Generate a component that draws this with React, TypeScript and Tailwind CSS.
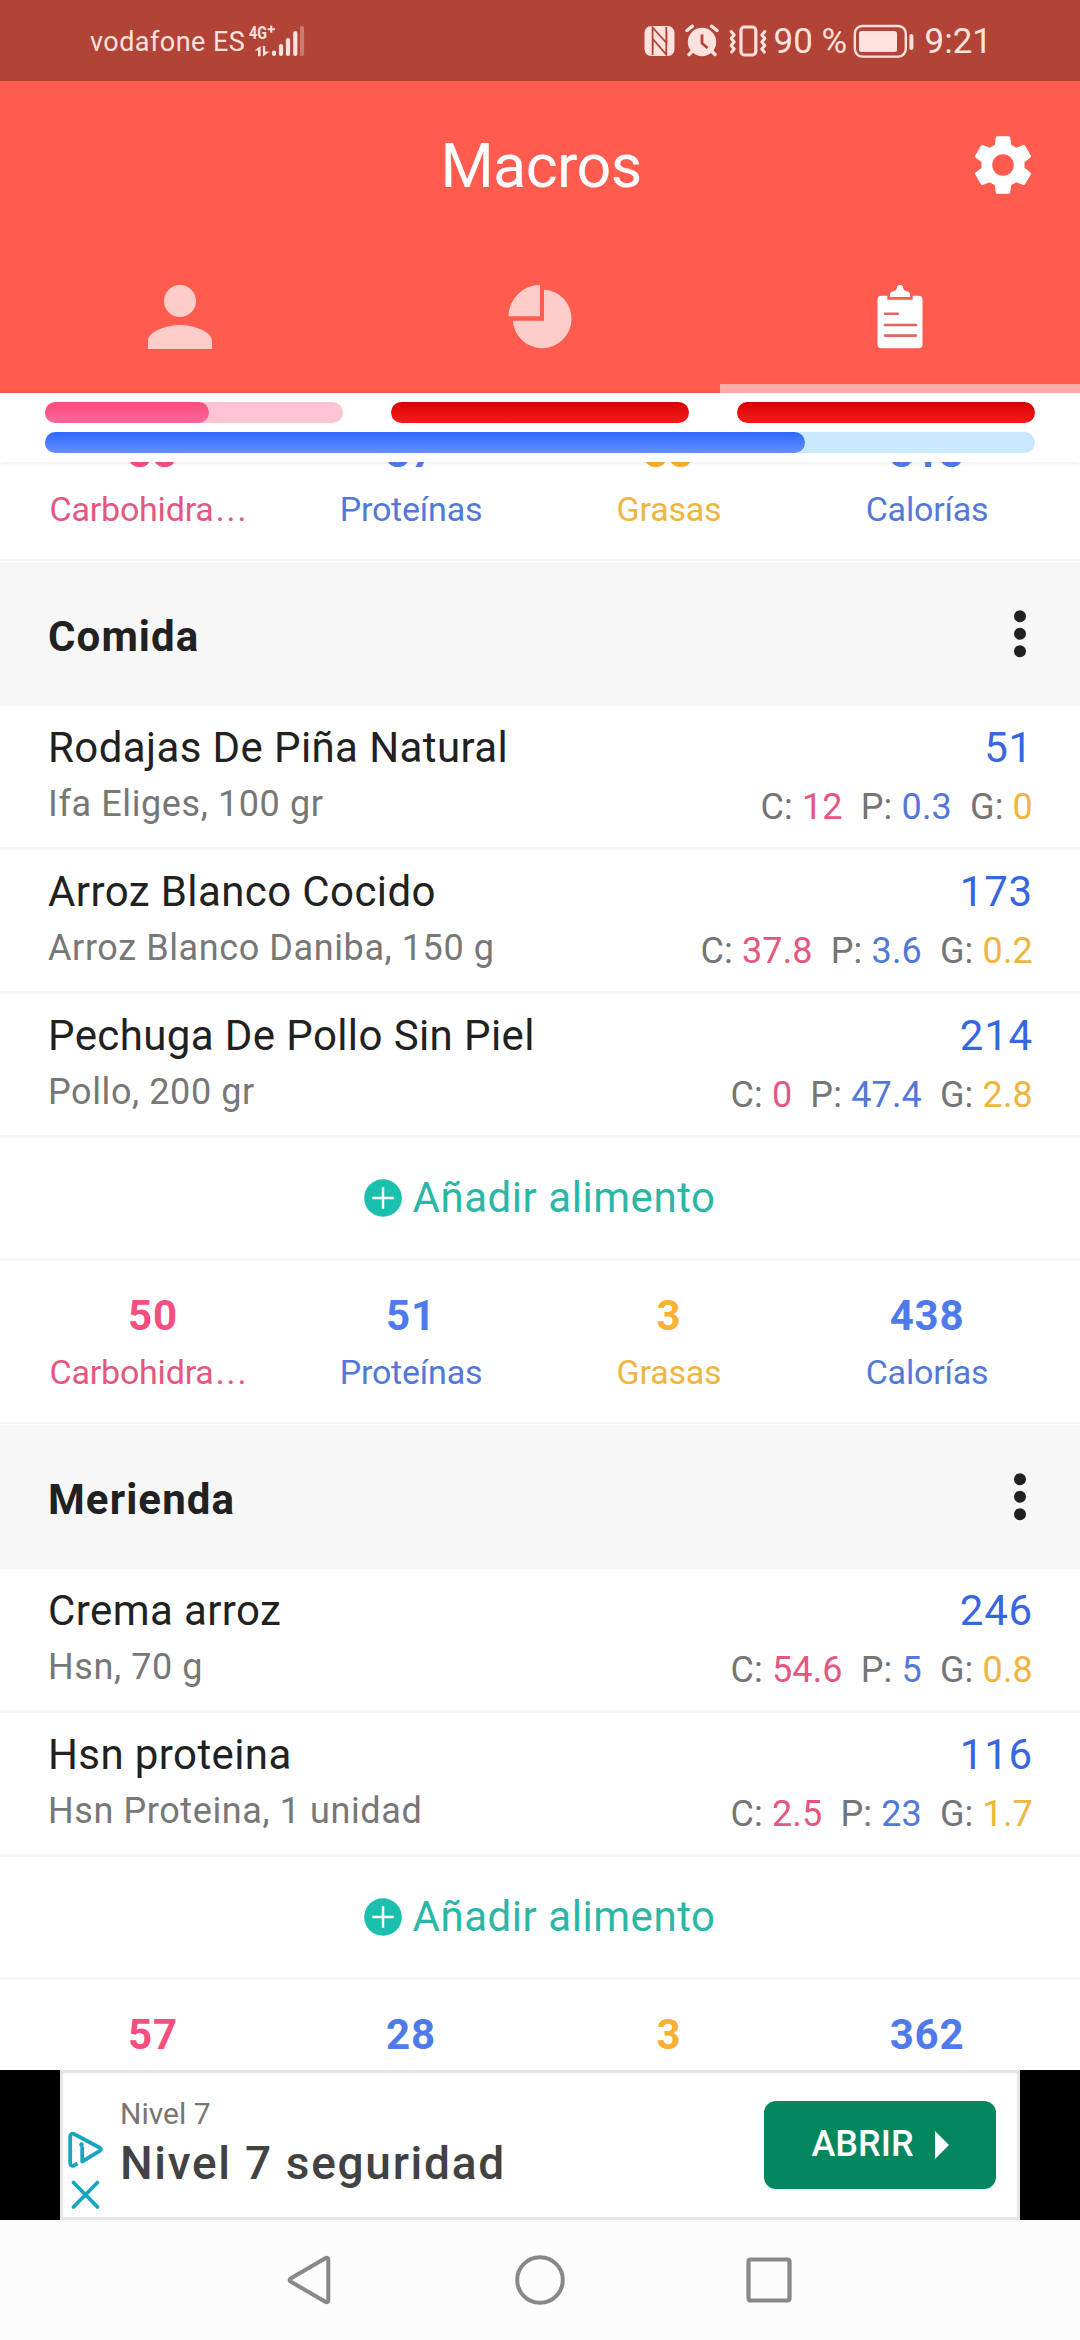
import React from "react";
import { MdSettings, MdPerson } from "react-icons/md";

const PINK = "text-[#e4587f]";
const BLUE = "text-[#5279d8]";
const AMBER = "text-[#efb442]";

type Food = { name: string; detail: string; kcal: string; c: string; p: string; g: string };

const comida: Food[] = [
  { name: "Rodajas De Piña Natural", detail: "Ifa Eliges, 100 gr", kcal: "51", c: "12", p: "0.3", g: "0" },
  { name: "Arroz Blanco Cocido", detail: "Arroz Blanco Daniba, 150 g", kcal: "173", c: "37.8", p: "3.6", g: "0.2" },
  { name: "Pechuga De Pollo Sin Piel", detail: "Pollo, 200 gr", kcal: "214", c: "0", p: "47.4", g: "2.8" },
];

const merienda: Food[] = [
  { name: "Crema arroz", detail: "Hsn, 70 g", kcal: "246", c: "54.6", p: "5", g: "0.8" },
  { name: "Hsn proteina", detail: "Hsn Proteina, 1 unidad", kcal: "116", c: "2.5", p: "23", g: "1.7" },
];

function StatusBar() {
  return (
    <div className="flex h-[81px] shrink-0 items-center bg-[#b24337] pl-[90px] pr-[88px] text-[#ffe2de]">
      <span className="pt-[2px] text-[27px] leading-[36px] tracking-[0.45px]">vodafone ES</span>
      <svg className="ml-[3px] h-[34px] w-[58px]" viewBox="247 23 58 34" fill="currentColor">
        <text x="248" y="38" fontSize="18" fontWeight="700" textLength="18" lengthAdjust="spacingAndGlyphs">4G</text>
        <path d="M266.6 28.2h7.4M270.3 24.6v7.2" stroke="currentColor" strokeWidth="2" />
        <path d="M253.5 49.6L259.6 45v10.2h-2.6v-5.6zM261.8 45h2.4v5.5h4.4L262 55.4z" />
        <g stroke="currentColor" strokeWidth="4.2" strokeLinecap="round">
          <path d="M273 51.5v1.4M280 45v7.9M287 39v13.9M294.3 32.2v20.7" />
          <path d="M301 27v25.9" opacity="0.35" />
        </g>
      </svg>
      <div className="ml-auto flex items-center">
        <svg className="h-[34px] w-[124px]" viewBox="643 23 124 34" fill="currentColor">
          <rect x="643.5" y="25" width="30" height="30" rx="6.5" />
          <path d="M651.6 54V26.5L665.5 42V31M665.3 26v27.5L651.8 38v11" fill="none" stroke="#b24337" strokeWidth="1.8" />
          <circle cx="701" cy="41" r="14.2" />
          <path d="M686 29.5l5.4-4.3M716 29.5l-5.4-4.3M692 49.5l-4 4M710 49.5l4 4" stroke="currentColor" strokeWidth="3.4" strokeLinecap="round" />
          <path d="M701 33.5v8.7l5.6 4.8" fill="none" stroke="#b24337" strokeWidth="2.8" />
          <rect x="740" y="26" width="14.8" height="28" rx="3.5" fill="none" stroke="currentColor" strokeWidth="3.2" />
          <path d="M730.2 30.5l3 3.5-3 3.5 3 3.5-3 3.5 3 3.5-2.5 3M763.8 30.5l-3 3.5 3 3.5-3 3.5 3 3.5-3 3.5 2.5 3" fill="none" stroke="currentColor" strokeWidth="3" strokeLinecap="round" strokeLinejoin="round" />
        </svg>
        <span className="ml-[6px] w-[79px] whitespace-nowrap pt-[2px] text-[35px] leading-[40px]">90 %</span>
        <svg className="h-[34px] w-[62px]" viewBox="853 23 62 34" fill="currentColor">
          <rect x="854.8" y="25" width="51" height="30.6" rx="7.5" fill="none" stroke="currentColor" strokeWidth="2.4" />
          <rect x="859" y="30" width="38" height="21" rx="2.5" />
          <rect x="909.4" y="33" width="4" height="16" rx="2" />
        </svg>
        <span className="ml-[10px] pt-[2px] text-[35px] leading-[40px]">9:21</span>
      </div>
    </div>
  );
}

function Header() {
  return (
    <header className="flex h-[312px] shrink-0 flex-col bg-[#ff5b4f] text-white">
      <div className="grid h-[168px] grid-cols-[1fr_auto_1fr] items-center">
        <span />
        <h1 className="pl-[2px] pt-[2px] text-[61px] leading-[72px] tracking-[-0.6px]">Macros</h1>
        <MdSettings className="ml-auto mr-[41.5px] h-[72px] w-[72px]" />
      </div>
      <nav className="grid h-[144px] grid-cols-3">
        <div className="flex justify-center pt-[19.5px] text-[#ffcdc9]">
          <MdPerson className="h-[96px] w-[96px]" />
        </div>
        <div className="flex justify-center pt-[35px] text-[#ffcdc9]">
          <svg className="h-[66px] w-[66px]" viewBox="507 284 66 66" fill="currentColor">
            <path d="M540 285v31.3h-31.5A31.4 31.4 0 0 1 540 285z" />
            <path d="M544 289.4a29.4 29.4 0 1 1-31.2 31.3H544z" />
          </svg>
        </div>
        <div className="flex flex-col items-center justify-between pt-[35px]">
          <svg className="h-[66px] w-[48px]" viewBox="876 284 48 66" fill="currentColor">
            <rect x="877.5" y="295.7" width="45" height="52.5" rx="4" />
            <path d="M888.6 295v3.4h22.8V295" fill="none" stroke="#ff5b4f" strokeWidth="2.6" />
            <path d="M890 297v-2.5c0-2 1.5-3 3.5-3.3 2.2-.4 3.2-1.6 3.4-3.7.1-1.6.9-2.5 3.1-2.5s3 .9 3.100 2.5c.2 2.100 1.200 3.300 3.400 3.700 2 .3 3.500 1.300 3.500 3.300v2.500z" />
            <path d="M885 313.800h12.800M885 325h31M885 335.600h31" stroke="#e0655e" strokeWidth="2.600" strokeLinecap="round" />
          </svg>
          <div className="h-[9px] w-full bg-[#ffaca6]" />
        </div>
      </nav>
    </header>
  );
}

function ProgressBars() {
  return (
    <div className="z-10 flex h-[69px] shrink-0 flex-col gap-[9px] bg-white px-[45px] pt-[9px] shadow-[0_1px_5px_rgba(0,0,0,0.09)]">
      <div className="grid grid-cols-3 gap-[48px]">
        <div className="h-[21px] rounded-full bg-[#fec4d1]">
          <div className="h-full w-[164px] rounded-full bg-linear-to-b from-[#fb4b7c] to-[#fe669c]" />
        </div>
        <div className="h-[21px] rounded-full bg-linear-to-b from-[#d60000] to-[#f71b1b]" />
        <div className="h-[21px] rounded-full bg-linear-to-b from-[#d60000] to-[#f71b1b]" />
      </div>
      <div className="h-[21px] rounded-full bg-[#cbe9fe]">
        <div className="h-full w-[760px] rounded-full bg-linear-to-b from-[#2f68ff] to-[#638eff]" />
      </div>
    </div>
  );
}

function Total({ value, strong, soft, children }: { value: string; strong: string; soft: string; children: React.ReactNode }) {
  return (
    <div className="flex min-w-0 flex-col items-center gap-[10px] px-[24px]">
      <span className={"text-[42px] font-bold leading-[50px] tracking-[0.8px] " + strong}>{value}</span>
      <span className={"whitespace-nowrap text-[34px] leading-[42px] tracking-[-0.2px] " + soft}>{children}</span>
    </div>
  );
}

function Totals({ values }: { values: string[] }) {
  return (
    <div className="h-[164px] shrink-0 border-b border-white">
      <div className="grid h-[163px] grid-cols-4 border-b-2 border-[#f5f5f5] px-[24px] pt-[30px]">
        <Total value={values[0]} strong="text-[#f44f7f]" soft={PINK}>
          <span className="-ml-[8px]">Carbohidra</span>
          <span className="ml-[2px] tracking-[2px]">...</span>
        </Total>
        <Total value={values[1]} strong="text-[#4f7bea]" soft={BLUE}>Proteínas</Total>
        <Total value={values[2]} strong="text-[#f8b133]" soft={AMBER}>Grasas</Total>
        <Total value={values[3]} strong="text-[#4f7bea]" soft={BLUE}>Calorías</Total>
      </div>
    </div>
  );
}

function FoodRow({ food }: { food: Food }) {
  return (
    <div className="flex h-[144px] shrink-0 justify-between border-b-[3px] border-[#f6f6f6] pl-[48px] pr-[47px] pt-[17px]">
      <div className="flex flex-col gap-[9px]">
        <span className="text-[42px] leading-[50px] tracking-[0.4px] text-[#212121]">{food.name}</span>
        <span className="text-[36px] leading-[44px] tracking-[0.6px] text-[#777]">{food.detail}</span>
      </div>
      <div className="flex flex-col items-end gap-[12px]">
        <span className="text-[42px] leading-[50px] tracking-[0.8px] text-[#3767e0]">{food.kcal}</span>
        <div className="flex gap-[18px] text-[36px] leading-[44px] tracking-[0.15px] text-[#757575]">
          <span>C: <span className={PINK}>{food.c}</span></span>
          <span>P: <span className={BLUE}>{food.p}</span></span>
          <span>G: <span className={AMBER}>{food.g}</span></span>
        </div>
      </div>
    </div>
  );
}

function Meal({ title, foods, totals }: { title: string; foods: Food[]; totals: string[] }) {
  return (
    <section className="flex shrink-0 flex-col">
      <div className="flex h-[144px] items-center justify-between bg-[#f7f7f7] pl-[48px] pr-[54px]">
        <h2 className="pt-[5px] text-[42px] font-bold leading-[50px] tracking-[1.1px] text-[#212121]">{title}</h2>
        <svg className="h-[48px] w-[12px]" viewBox="0 0 12 48" fill="#212121">
          <circle cx="6" cy="6.2" r="6" />
          <circle cx="6" cy="23.7" r="6" />
          <circle cx="6" cy="41.2" r="6" />
        </svg>
      </div>
      {foods.map((food) => (
        <FoodRow key={food.name} food={food} />
      ))}
      <div className="flex h-[123px] items-center justify-center gap-[10px] border-b-[3px] border-[#f6f6f6]">
        <svg className="h-[38px] w-[38px]" viewBox="0 0 38 38">
          <circle cx="19" cy="19" r="18.8" fill="#1bbfae" />
          <path d="M8.2 19h21.6M19 8.2v21.6" stroke="#fff" strokeWidth="2.5" />
        </svg>
        <span className="text-[42px] leading-[50px] tracking-[0.55px] text-[#2cb6a6]">Añadir alimento</span>
      </div>
      <Totals values={totals} />
    </section>
  );
}

function AdBanner() {
  return (
    <div className="flex h-[150px] shrink-0 bg-black px-[60px]">
      <div className="flex flex-1 border-[3px] border-[#e5e5e5] bg-[#fefefe]">
        <svg className="ml-[3px] mt-[56px] h-[84px] w-[40px]" viewBox="66 2129 40 84" fill="none" stroke="#16a6bf">
          <path d="M77.5 2163.4l-3 1.8c-2.5 1.3-4.3.5-4.3-2.2v-26.5c0-2.7 1.8-3.5 4.3-2.2l25.3 13.5c1.6.9 1.6 2.2 0 3.1l-17.6 10.6v-15" strokeWidth="3.8" strokeLinejoin="round" />
          <circle cx="81.5" cy="2144.6" r="2.3" fill="#16a6bf" stroke="none" />
          <path d="M73.5 2182.5l24 24.5M97.5 2182.5l-24 24.5" strokeWidth="3.8" strokeLinecap="round" />
        </svg>
        <div className="ml-[14px] flex flex-col gap-[4px] pt-[23px]">
          <span className="text-[30px] leading-[36px] text-[#777]">Nivel 7</span>
          <span className="text-[46px] font-medium leading-[54px] tracking-[1.7px] text-[#424242]">Nivel 7 seguridad</span>
        </div>
        <button className="ml-auto mr-[21px] mt-[28px] flex h-[88px] w-[232px] items-center justify-center gap-[21px] rounded-[12px] bg-[#02875f] text-white">
          <span className="-mt-[2px] text-[36px] font-medium leading-[44px]">ABRIR</span>
          <svg className="h-[28px] w-[14px]" viewBox="0 0 14 28" fill="currentColor">
            <path d="M0 0l14 14L0 28z" />
          </svg>
        </button>
      </div>
    </div>
  );
}

function NavigationBar() {
  return (
    <div className="flex h-[120px] shrink-0 justify-center bg-[#fcfcfc]">
      <div className="grid w-[690px] grid-cols-3 items-center justify-items-center text-[#888]">
        <svg className="mr-[3px] h-[52px] w-[46px]" viewBox="0 0 46 52" fill="none" stroke="currentColor">
          <path d="M42.3 5.5v41c0 1.5-1.3 2.2-2.6 1.4L4.6 27.6c-1.3-.8-1.3-2.4 0-3.2L39.7 4.1c1.3-.8 2.6-.1 2.6 1.4z" strokeWidth="4" />
        </svg>
        <svg className="h-[52px] w-[52px]" viewBox="0 0 52 52" fill="none" stroke="currentColor">
          <circle cx="26" cy="26" r="22.8" strokeWidth="4" />
        </svg>
        <svg className="mr-[2px] h-[46px] w-[46px]" viewBox="0 0 46 46" fill="none" stroke="currentColor">
          <rect x="2.5" y="2.5" width="41" height="41" rx="2" strokeWidth="4.2" />
        </svg>
      </div>
    </div>
  );
}

export default function App() {
  return (
    <div className="flex h-[2340px] w-[1080px] flex-col overflow-hidden bg-white font-['Roboto',sans-serif]">
      <StatusBar />
      <Header />
      <ProgressBars />
      <main className="-mt-[64px] flex min-h-0 flex-1 flex-col overflow-hidden">
        <Totals values={["33", "37", "33", "313"]} />
        <Meal title="Comida" foods={comida} totals={["50", "51", "3", "438"]} />
        <Meal title="Merienda" foods={merienda} totals={["57", "28", "3", "362"]} />
      </main>
      <AdBanner />
      <NavigationBar />
    </div>
  );
}
